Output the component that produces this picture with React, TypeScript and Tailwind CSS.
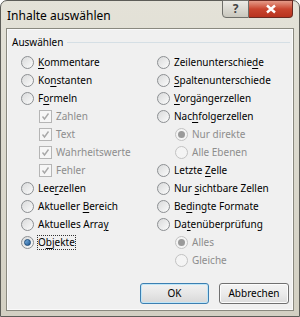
import React from 'react'

type Item = {
    label: string
    key?: number
    kind: 'radio' | 'check'
    indent?: boolean
    disabled?: boolean
    checked?: boolean
    focus?: boolean
}

const left: Item[] = [
    { label: 'Kommentare', key: 0, kind: 'radio' },
    { label: 'Konstanten', key: 2, kind: 'radio' },
    { label: 'Formeln', key: 1, kind: 'radio' },
    { label: 'Zahlen', kind: 'check', indent: true, disabled: true, checked: true },
    { label: 'Text', kind: 'check', indent: true, disabled: true, checked: true },
    { label: 'Wahrheitswerte', kind: 'check', indent: true, disabled: true, checked: true },
    { label: 'Fehler', kind: 'check', indent: true, disabled: true, checked: true },
    { label: 'Leerzellen', key: 3, kind: 'radio' },
    { label: 'Aktueller Bereich', key: 10, kind: 'radio' },
    { label: 'Aktuelles Array', key: 14, kind: 'radio' },
    { label: 'Objekte', key: 1, kind: 'radio', checked: true, focus: true },
]

const right: Item[] = [
    { label: 'Zeilenunterschiede', key: 16, kind: 'radio' },
    { label: 'Spaltenunterschiede', key: 0, kind: 'radio' },
    { label: 'Vorgängerzellen', key: 0, kind: 'radio' },
    { label: 'Nachfolgerzellen', key: 3, kind: 'radio' },
    { label: 'Nur direkte', kind: 'radio', indent: true, disabled: true, checked: true },
    { label: 'Alle Ebenen', kind: 'radio', indent: true, disabled: true },
    { label: 'Letzte Zelle', key: 7, kind: 'radio' },
    { label: 'Nur sichtbare Zellen', key: 4, kind: 'radio' },
    { label: 'Bedingte Formate', key: 2, kind: 'radio' },
    { label: 'Datenüberprüfung', key: 2, kind: 'radio' },
    { label: 'Alles', kind: 'radio', indent: true, disabled: true, checked: true },
    { label: 'Gleiche', kind: 'radio', indent: true, disabled: true },
]

function Radio({ disabled, checked }: { disabled?: boolean; checked?: boolean }) {
    return (
        <div
            className={`flex h-[13px] w-[13px] shrink-0 items-center justify-center rounded-full border ${
                disabled ? 'border-[#c2c2c2] bg-[#f4f4f4]' : 'border-[#8c8f92] bg-gradient-to-br from-[#d9dadb] to-[#fbfbfb]'
            }`}
        >
            {checked && (
                <div
                    className={`h-[7px] w-[7px] rounded-full ${
                        disabled ? 'bg-[#9a9a9a]' : 'border border-[#1c4a78] bg-gradient-to-br from-[#7cb3e4] to-[#1f5a94]'
                    }`}
                />
            )}
        </div>
    )
}

function Check() {
    return (
        <div className="flex h-[13px] w-[13px] shrink-0 items-center justify-center border border-[#b5b5b5] bg-[#f6f6f6]">
            <svg width="9" height="9" viewBox="0 0 9 9">
                <path d="M1.5 4.5 L3.5 7 L7.5 1.5" fill="none" stroke="#a8a8a8" strokeWidth="1.4" />
            </svg>
        </div>
    )
}

function Label({ item }: { item: Item }) {
    const { label, key } = item
    const text =
        key === undefined ? (
            label
        ) : (
            <>
                {label.slice(0, key)}
                <span className="underline underline-offset-2">{label[key]}</span>
                {label.slice(key + 1)}
            </>
        )
    return (
        <span
            className={`whitespace-nowrap leading-[13px] ${item.disabled ? 'text-[#8d8d8d]' : 'text-black'} ${
                item.focus ? 'outline outline-1 outline-dotted outline-[#333]' : ''
            }`}
        >
            {text}
        </span>
    )
}

function Row({ item }: { item: Item }) {
    return (
        <div className={`flex h-[18px] items-center gap-[4px] ${item.indent ? 'pl-[18px]' : ''}`}>
            {item.kind === 'radio' ? <Radio disabled={item.disabled} checked={item.checked} /> : <Check />}
            <Label item={item} />
        </div>
    )
}

export default function App() {
    return (
        <div className="h-[317px] w-[300px] bg-white font-['Noto_Sans',sans-serif] text-[10px]">
            <div className="flex h-full w-full flex-col rounded-t-[7px] border border-[#5d5d58] bg-gradient-to-b from-[#e4e2d8] to-[#d3d0c3] px-[5px] pb-[5px]">
                <div className="flex h-[27px] shrink-0 items-start justify-between">
                    <div className="pl-[1px] pt-[6px] text-[12px] text-black">Inhalte auswählen</div>
                    <div className="flex h-[18px] -mt-px mr-[1px]">
                        <div className="flex w-[27px] items-center justify-center rounded-bl-[4px] border border-[#6f6f6a] bg-gradient-to-b from-[#ecebe6] to-[#c9c7bd] text-[12px] font-bold text-[#444]">
                            ?
                        </div>
                        <div className="flex w-[44px] items-center justify-center rounded-br-[4px] border border-l-0 border-[#6b2a22] bg-gradient-to-b from-[#e49a88] via-[#c9452f] to-[#b8331f]">
                            <svg width="12" height="10" viewBox="0 0 12 10">
                                <path d="M2 1.5 L10 8.5 M10 1.5 L2 8.5" stroke="white" strokeWidth="2.4" />
                            </svg>
                        </div>
                    </div>
                </div>
                <div className="flex flex-1 flex-col border border-[#8a897f] bg-[#f0f0f0] shadow-[inset_0_0_0_1px_#fafafa]">
                    <div className="flex items-center gap-[4px] pl-[5px] pr-[3px] pt-[7px]">
                        <span className="leading-[13px]">Auswählen</span>
                        <div className="h-px flex-1 bg-[#d5dfe5]" />
                    </div>
                    <div className="flex pt-[4px]">
                        <div className="flex w-[150px] flex-col pl-[14px]">
                            {left.map((item, i) => (
                                <Row key={i} item={item} />
                            ))}
                        </div>
                        <div className="flex flex-col">
                            {right.map((item, i) => (
                                <Row key={i} item={item} />
                            ))}
                        </div>
                    </div>
                    <div className="mt-auto flex justify-end gap-[10px] pb-[6px] pr-[4px]">
                        <button className="h-[21px] w-[69px] rounded-[3px] border border-[#3c7fb1] bg-gradient-to-b from-[#f2f2f2] via-[#e6e6e6] to-[#d8d8d8] shadow-[inset_0_0_0_1px_#bfe6f8] text-black">
                            OK
                        </button>
                        <button className="h-[21px] w-[70px] rounded-[3px] border border-[#707070] bg-gradient-to-b from-[#f4f4f4] via-[#ebebeb] to-[#dcdcdc] shadow-[inset_0_0_0_1px_#fcfcfc] text-black">
                            Abbrechen
                        </button>
                    </div>
                </div>
            </div>
        </div>
    )
}
